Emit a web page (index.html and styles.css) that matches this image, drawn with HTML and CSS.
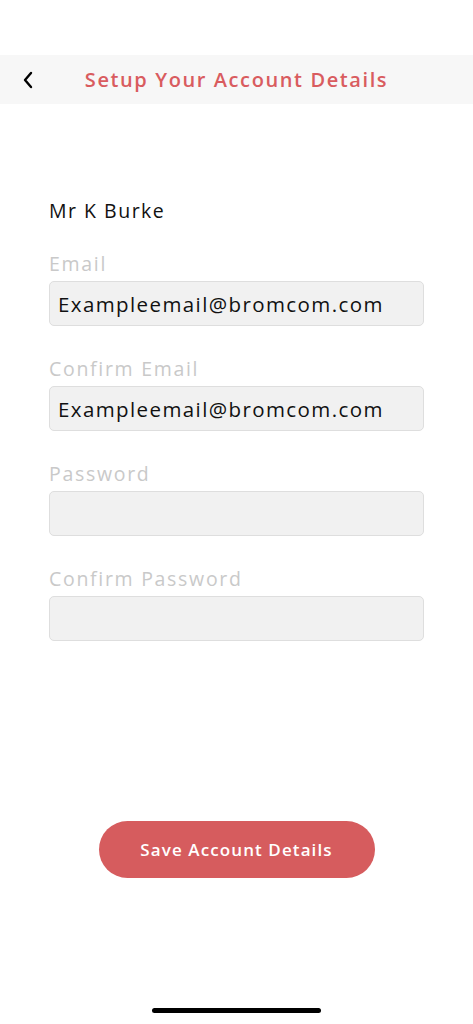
FILE: index.html
```html
<!DOCTYPE html>
<html lang="en">
<head>
    <meta charset="UTF-8">
    <meta name="viewport" content="width=device-width, initial-scale=1.0">
    <link rel="stylesheet" href="styles.css">
</head>
<body>

<div class="screen">
    <header class="topbar">
        <button class="back-btn" aria-label="Back">
            <svg width="12" height="18" viewBox="0 0 12 18">
                <path d="M9 2 L3 9 L9 16" fill="none" stroke="#000" stroke-width="2.4" stroke-linecap="round" stroke-linejoin="round"/>
            </svg>
        </button>
        <h1 class="title">Setup Your Account Details</h1>
    </header>

    <main class="form">
        <p class="name">Mr K Burke</p>

        <div class="field">
            <label>Email</label>
            <div class="input">Exampleemail@bromcom.com</div>
        </div>
        <div class="field">
            <label>Confirm Email</label>
            <div class="input">Exampleemail@bromcom.com</div>
        </div>
        <div class="field">
            <label>Password</label>
            <div class="input"></div>
        </div>
        <div class="field">
            <label>Confirm Password</label>
            <div class="input"></div>
        </div>
    </main>

    <div class="actions">
        <button class="save-btn">Save Account Details</button>
    </div>

    <div class="home-bar"></div>
</div>

</body>
</html>
```

FILE: styles.css
```css
body {
    margin: 0;
    background-color: #fff;
    font-family: 'Open Sans', sans-serif;
}

.screen {
    width: 473px;
    height: 1024px;
    display: flex;
    flex-direction: column;
    padding-top: 55px;
    box-sizing: border-box;
}

.topbar {
    height: 49px;
    background-color: #f7f7f7;
    display: flex;
    align-items: center;
}

.back-btn {
    border: none;
    background: none;
    padding: 0;
    margin-left: 22px;
    width: 14px;
    height: 18px;
    display: flex;
    align-items: center;
}

.title {
    flex: 1;
    margin: 0 36px 0 0;
    text-align: center;
    font-size: 20px;
    font-weight: 600;
    color: #d95c5f;
    letter-spacing: 1.6px;
}

.form {
    padding: 95px 49px 0 49px;
}

.name {
    margin: 0;
    font-size: 19.5px;
    color: #111;
    line-height: 24px;
    letter-spacing: 1.5px;
}

.field {
    margin-top: 29px;
}

.field + .field {
    margin-top: 31px;
}

.field label {
    display: block;
    font-size: 19.5px;
    color: #c9c9c9;
    line-height: 24px;
    letter-spacing: 1.7px;
    margin-bottom: 5px;
}

.input {
    height: 43px;
    background-color: #f1f1f1;
    border: 1px solid #dedede;
    border-radius: 5px;
    padding: 0 8px;
    display: flex;
    align-items: center;
    font-size: 20.5px;
    color: #111;
    letter-spacing: 1.4px;
}

.actions {
    margin-top: auto;
    margin-bottom: 130px;
    display: flex;
    justify-content: center;
}

.save-btn {
    width: 276px;
    height: 57px;
    border: none;
    border-radius: 29px;
    background-color: #d65c5e;
    color: #fff;
    font-family: 'Open Sans', sans-serif;
    font-size: 17px;
    font-weight: 600;
    letter-spacing: 1.1px;
}

.home-bar {
    width: 169px;
    height: 5px;
    background-color: #000;
    border-radius: 3px;
    margin: 0 auto 11px auto;
}
```
